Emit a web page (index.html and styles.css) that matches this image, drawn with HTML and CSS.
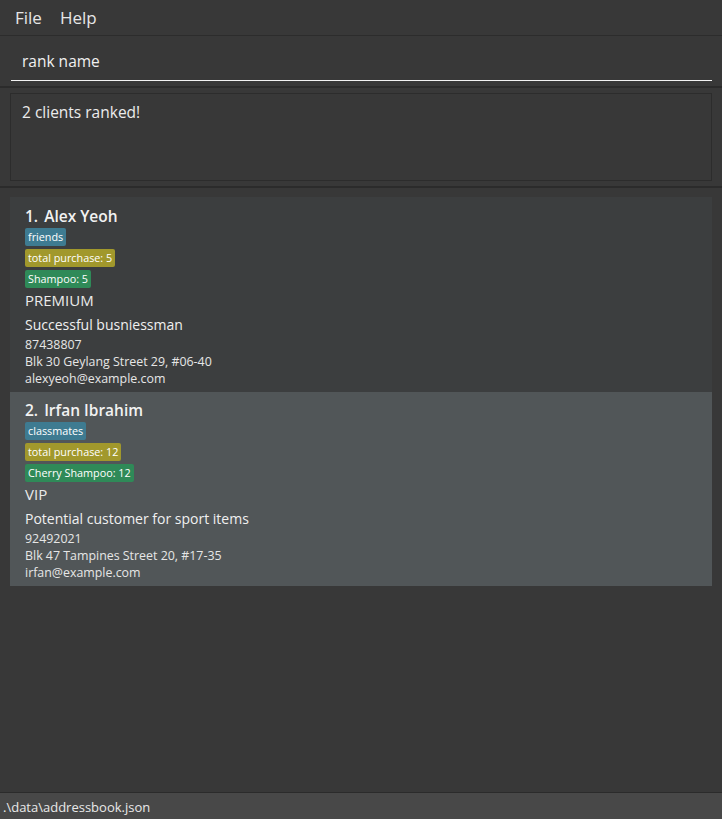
FILE: index.html
```html
<!DOCTYPE html>
<html>
<head>
<meta charset="utf-8">
<link rel="stylesheet" href="styles.css">
</head>
<body>
<div class="app">
  <div class="menubar">
    <span class="menu">File</span>
    <span class="menu">Help</span>
  </div>
  <div class="command">
    <div class="command-input">rank name</div>
  </div>
  <div class="result">
    <div class="result-box">2 clients ranked!</div>
  </div>
  <div class="list">
    <div class="card">
      <div class="name"><span class="idx">1.</span> Alex Yeoh</div>
      <div class="tags">
        <span class="tag tag-blue">friends</span>
        <span class="tag tag-olive">total purchase: 5</span>
        <span class="tag tag-green">Shampoo: 5</span>
      </div>
      <div class="tier">PREMIUM</div>
      <div class="desc">Successful busniessman</div>
      <div class="small">87438807</div>
      <div class="small">Blk 30 Geylang Street 29, #06-40</div>
      <div class="small">alexyeoh@example.com</div>
    </div>
    <div class="card card-alt">
      <div class="name"><span class="idx">2.</span> Irfan Ibrahim</div>
      <div class="tags">
        <span class="tag tag-blue">classmates</span>
        <span class="tag tag-olive">total purchase: 12</span>
        <span class="tag tag-green">Cherry Shampoo: 12</span>
      </div>
      <div class="tier">VIP</div>
      <div class="desc">Potential customer for sport items</div>
      <div class="small">92492021</div>
      <div class="small">Blk 47 Tampines Street 20, #17-35</div>
      <div class="small">irfan@example.com</div>
    </div>
  </div>
  <div class="status">.\data\addressbook.json</div>
</div>
</body>
</html>
```
FILE: styles.css
```css
html, body {
  margin: 0;
  padding: 0;
  background: #383838;
}
body {
  font-family: "Open Sans", "Noto Sans", sans-serif;
  color: #ffffff;
}
.app {
  width: 722px;
  height: 819px;
  display: flex;
  flex-direction: column;
  background: #383838;
}
.menubar {
  height: 35px;
  display: flex;
  align-items: center;
  padding-left: 6px;
  border-bottom: 1px solid #2c2c2c;
}
.menu {
  font-size: 17px;
  color: #e6e6e6;
  padding: 0 9px;
  line-height: 35px;
}
.command {
  height: 50px;
  padding: 0 10px 0 11px;
  border-bottom: 2px solid #2b2b2b;
  display: flex;
  flex-direction: column;
  justify-content: flex-end;
}
.command-input {
  font-size: 15.5px;
  color: #f0f0f0;
  line-height: 22px;
  padding: 0 0 8px 11px;
  border-bottom: 1px solid #f2f2f2;
  margin-bottom: 5px;
}
.result {
  padding: 5px 10px 5px 10px;
  border-bottom: 2px solid #2b2b2b;
}
.result-box {
  height: 88px;
  border: 1px solid #2c2c2c;
  font-size: 15.5px;
  color: #ececec;
  line-height: 22px;
  padding: 7px 11px;
  box-sizing: border-box;
}
.list {
  flex: 1;
  padding: 9px 10px 0 10px;
}
.card {
  background: #3c3e3f;
  padding: 8px 15px 0 15px;
  height: 195px;
  box-sizing: border-box;
}
.card-alt {
  background: #515658;
  height: 194px;
  padding-top: 7px;
}
.name {
  font-size: 15.5px;
  font-weight: 600;
  line-height: 22px;
  color: #f2f2f2;
}
.idx {
  margin-right: 2px;
}
.tags {
  display: flex;
  flex-direction: column;
  align-items: flex-start;
  gap: 3px;
  margin-top: 1px;
}
.tag {
  font-size: 10.8px;
  line-height: 18px;
  height: 18px;
  padding: 0 3px;
  border-radius: 2px;
  color: #ffffff;
}
.tag-blue { background: #3e7b91; }
.tag-olive { background: #a1982c; }
.tag-green { background: #2f8a58; }
.tier {
  font-size: 15px;
  line-height: 20px;
  margin-top: 2px;
  color: #eaeaea;
}
.desc {
  font-size: 14px;
  font-weight: 500;
  line-height: 20px;
  margin-top: 5px;
  margin-bottom: 1px;
  color: #f0f0f0;
}
.small {
  font-size: 12.4px;
  line-height: 17px;
  color: #e6e6e6;
}
.status {
  height: 27px;
  border-top: 1px solid #2b2b2b;
  background: #484848;
  font-size: 13px;
  line-height: 26px;
  padding: 1px 0 0 3px;
  box-sizing: border-box;
  color: #e8e8e8;
}
```
